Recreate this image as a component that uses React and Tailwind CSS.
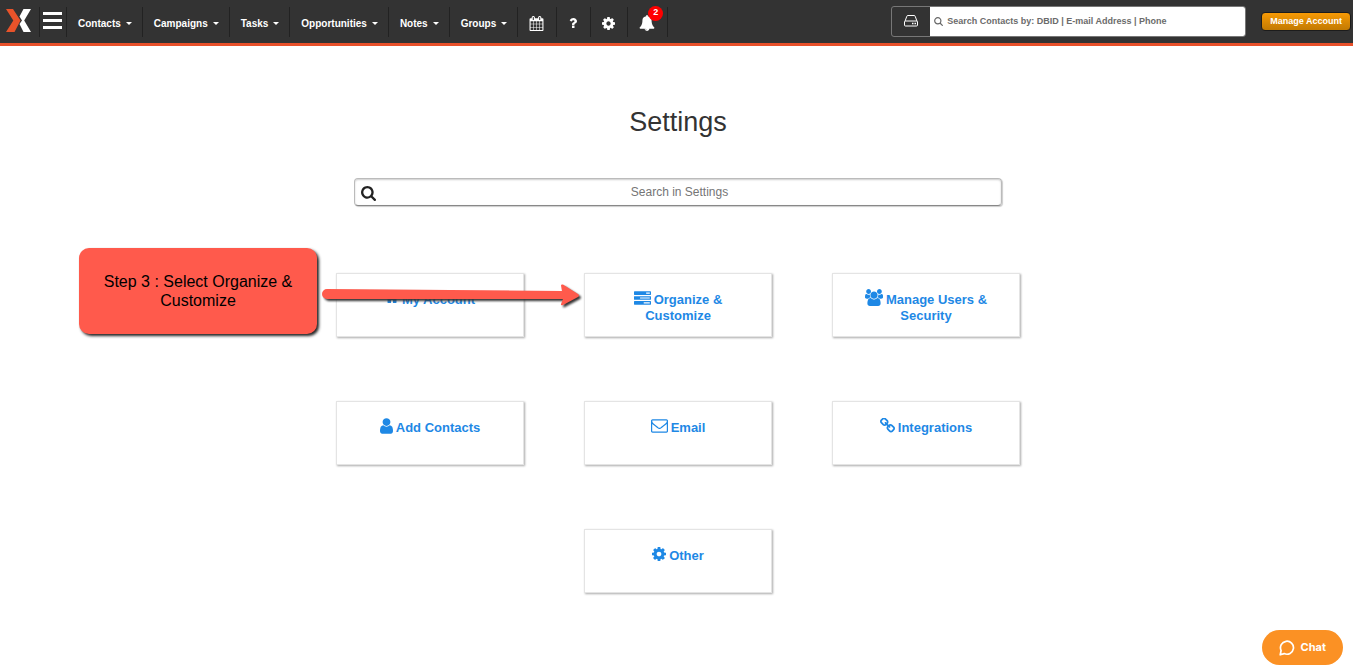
const ICONS = {
  calendar: {
    box: "0 0 1792 1792",
    d: "M192 1664h288v-288h-288v288zm352 0h320v-288h-320v288zm-352-352h288v-320h-288v320zm352 0h320v-320h-320v320zm-352-384h288v-288h-288v288zm736 736h320v-288h-320v288zm-384-736h320v-288h-320v288zm768 736h288v-288h-288v288zm-384-352h320v-320h-320v320zm-352-864v-288q0-13-9.5-22.5t-22.5-9.5h-64q-13 0-22.5 9.5t-9.5 22.5v288q0 13 9.5 22.5t22.5 9.5h64q13 0 22.5-9.5t9.5-22.5zm736 864h288v-320h-288v320zm-384-384h320v-288h-320v288zm384 0h288v-288h-288v288zm32-480v-288q0-13-9.5-22.5t-22.5-9.5h-64q-13 0-22.5 9.5t-9.5 22.5v288q0 13 9.5 22.5t22.5 9.5h64q13 0 22.5-9.5t9.5-22.5zm384-64v1280q0 52-38 90t-90 38h-1408q-52 0-90-38t-38-90v-1280q0-52 38-90t90-38h128v-96q0-66 47-113t113-47h64q66 0 113 47t47 113v96h384v-96q0-66 47-113t113-47h64q66 0 113 47t47 113v96h128q52 0 90 38t38 90z",
  },
  search: {
    box: "64 128 1664 1664",
    d: "M1216 832q0-185-131.5-316.5t-316.5-131.5-316.5 131.5-131.5 316.5 131.5 316.5 316.5 131.5 316.5-131.5 131.5-316.5zm512 832q0 52-38 90t-90 38q-54 0-90-38l-343-342q-179 124-399 124-143 0-273.5-55.5t-225-150-150-225-55.5-273.5 55.5-273.5 150-225 225-150 273.5-55.5 273.5 55.5 225 150 150 225 55.5 273.5q0 220-124 399l343 343q37 37 37 90z",
  },
  cog: {
    box: "128 128 1536 1536",
    d: "M1152 896q0-106-75-181t-181-75-181 75-75 181 75 181 181 75 181-75 75-181zm512-109v222q0 12-8 23t-20 13l-185 28q-19 54-39 91 35 50 107 138 10 12 10 25t-9 23q-27 37-99 108t-94 71q-12 0-26-9l-138-108q-44 23-91 38-16 136-29 186-7 28-36 28h-222q-14 0-24.5-8.5t-11.5-21.5l-28-184q-49-16-90-37l-141 107q-10 9-25 9-14 0-25-11-126-114-165-168-7-10-7-23 0-12 8-23 15-21 51-66.5t54-70.5q-27-50-41-99l-183-27q-13-2-21-12.5t-8-23.5v-222q0-12 8-23t19-13l186-28q14-46 39-92-40-57-107-138-10-12-10-24 0-10 9-23 26-36 98.5-107.5t94.5-71.5q13 0 26 10l138 107q44-23 91-38 16-136 29-186 7-28 36-28h222q14 0 24.5 8.5t11.5 21.5l28 184q49 16 90 37l142-107q9-9 24-9 13 0 25 10 129 119 165 170 7 8 7 22 0 12-8 23-15 21-51 66.5t-54 70.5q26 50 41 98l183 28q13 2 21 12.5t8 23.5z",
  },
  bell: {
    box: "0 0 1792 1792",
    d: "M912 1696q0-16-16-16-59 0-101.5-42.5t-42.5-101.5q0-16-16-16t-16 16q0 73 51.5 124.5t124.5 51.5q16 0 16-16zm816-288q0 52-38 90t-90 38h-448q0 106-75 181t-181 75-181-75-75-181h-448q-52 0-90-38t-38-90q50-42 91-88t85-119.5 74.5-158.5 50-206 19.5-260q0-152 117-282.5t307-158.5q-8-19-8-39 0-40 28-68t68-28 68 28 28 68q0 20-8 39 190 28 307 158.5t117 282.5q0 139 19.5 260t50 206 74.5 158.5 85 119.5 91 88z",
  },
  question: {
    box: "384 256 1024 1280",
    d: "M1088 1256v240q0 16-12 28t-28 12h-240q-16 0-28-12t-12-28v-240q0-16 12-28t28-12h240q16 0 28 12t12 28zm316-600q0 54-15.5 101t-35 76.5-55 59.5-57.5 43.5-61 35.5q-41 23-68.5 65t-27.5 67q0 17-12 32.5t-28 15.5h-240q-15 0-25.5-18.5t-10.5-37.5v-45q0-83 65-156.5t143-108.5q59-27 84-56t25-76q0-42-46.5-74t-107.5-32q-65 0-108 29-35 25-107 115-13 16-31 16-12 0-25-8l-164-125q-13-10-15.5-25t5.5-28q160-266 464-266 80 0 161 31t146 83 106 127.5 41 158.5z",
  },
  home: {
    box: "64 128 1664 1536",
    d: "M1472 992v480q0 26-19 45t-45 19h-384v-384h-256v384h-384q-26 0-45-19t-19-45v-480q0-1 .5-3t.5-3l575-474 575 474q1 2 1 6zm223-69l-62 74q-8 9-21 11h-3q-13 0-21-7l-692-577-692 577q-12 8-24 7-13-2-21-11l-62-74q-8-10-7-23.5t11-21.5l719-599q32-26 76-26t76 26l244 204v-195q0-14 9-23t23-9h192q14 0 23 9t9 23v408l219 182q10 8 11 21.5t-7 23.5z",
  },
  tasks: {
    box: "0 128 1792 1408",
    d: "M1024 1408h640v-128h-640v128zm-384-512h1024v-128h-1024v128zm640-512h384v-128h-384v128zm512 832v256q0 26-19 45t-45 19h-1664q-26 0-45-19t-19-45v-256q0-26 19-45t45-19h1664q26 0 45 19t19 45zm0-512v256q0 26-19 45t-45 19h-1664q-26 0-45-19t-19-45v-256q0-26 19-45t45-19h1664q26 0 45 19t19 45zm0-512v256q0 26-19 45t-45 19h-1664q-26 0-45-19t-19-45v-256q0-26 19-45t45-19h1664q26 0 45 19t19 45z",
  },
  users: {
    box: "0 0 1920 1792",
    d: "M593 896q-162 5-265 128h-134q-82 0-138-40.5t-56-118.5q0-353 124-353 6 0 43.5 21t97.5 42.5 119 21.5q67 0 133-23-5 37-5 66 0 159 93 256zm1071 637q0 120-73 189.5t-194 69.5h-874q-121 0-194-69.5t-73-189.5q0-53 3.5-103.5t14-109 26.5-108.5 43-97.5 62-81 85.5-53.5 111.5-20q10 0 43 21.5t73 48 107 48 135 21.5 135-21.5 107-48 73-48 43-21.5q61 0 111.5 20t85.5 53.5 62 81 43 97.5 26.5 108.5 14 109 3.5 103.5zm-1024-1277q0 106-75 181t-181 75-181-75-75-181 75-181 181-75 181 75 75 181zm704 384q0 159-112.5 271.5t-271.5 112.5-271.5-112.5-112.5-271.5 112.5-271.5 271.5-112.5 271.5 112.5 112.5 271.5zm576 225q0 78-56 118.5t-138 40.5h-134q-103-123-265-128 93-97 93-256 0-29-5-66 66 23 133 23 59 0 119-21.5t97.5-42.5 43.5-21q124 0 124 353zm-128-609q0 106-75 181t-181 75-181-75-75-181 75-181 181-75 181 75 75 181z",
  },
  user: {
    box: "256 128 1280 1536",
    d: "M1536 1399q0 109-62.5 187t-150.5 78h-854q-88 0-150.5-78t-62.5-187q0-85 8.5-160.5t31.5-152 58.5-131 94-89 134.5-34.5q131 128 313 128t313-128q76 0 134.5 34.5t94 89 58.5 131 31.5 152 8.5 160.5zm-256-887q0 159-112.5 271.5t-271.5 112.5-271.5-112.5-112.5-271.5 112.5-271.5 271.5-112.5 271.5 112.5 112.5 271.5z",
  },
  envelope: {
    box: "0 256 1792 1408",
    d: "M1664 1504v-768q-32 36-69 66-268 206-426 338-51 43-83 67t-86.5 48.5-102.5 24.5h-2q-48 0-102.5-24.5t-86.5-48.5-83-67q-158-132-426-338-37-30-69-66v768q0 13 9.5 22.5t22.5 9.5h1472q13 0 22.5-9.5t9.5-22.5zm0-1051v-24.5l-.5-13-3-12.5-5.5-9-9-7.5-14-2.5h-1472q-13 0-22.5 9.5t-9.5 22.5q0 168 147 284 193 152 401 317 6 5 35 29.5t46 37.5 44.5 31.5 50.5 27.5 43 9h2q20 0 43-9t50.5-27.5 44.5-31.5 46-37.5 35-29.5q208-165 401-317 54-43 100.5-115.5t46.5-131.5zm128-37v1088q0 66-47 113t-113 47h-1472q-66 0-113-47t-47-113v-1088q0-66 47-113t113-47h1472q66 0 113 47t47 113z",
  },
  link: {
    box: "80 80 1632 1632",
    d: "M1520 1216q0-40-28-68l-208-208q-28-28-68-28-42 0-72 32 3 3 19 18.5t21.5 21.5 15 19 13 25.5 3.5 27.5q0 40-28 68t-68 28q-15 0-27.5-3.5t-25.5-13-19-15-21.5-21.5-18.5-19q-33 31-33 73 0 40 28 68l206 207q27 27 68 27 40 0 68-26l147-146q28-28 28-67zm-703-705q0-40-28-68l-206-207q-28-28-68-28-39 0-68 27l-147 146q-28 28-28 67 0 40 28 68l208 208q27 27 68 27 42 0 72-31-3-3-19-18.5t-21.5-21.5-15-19-13-25.5-3.5-27.5q0-40 28-68t68-28q15 0 27.5 3.5t25.5 13 19 15 21.5 21.5 18.5 19q33-31 33-73zm895 705q0 120-85 203l-147 146q-83 83-203 83-121 0-204-85l-206-207q-83-83-83-203 0-123 88-209l-88-88q-86 88-208 88-120 0-204-84l-208-208q-84-84-84-204t85-203l147-146q83-83 203-83 121 0 204 85l206 207q83 83 83 203 0 123-88 209l88 88q86-88 208-88 120 0 204 84l208 208q84 84 84 204z",
  },
};

function Icon({ name, className }) {
  return (
    <svg viewBox={ICONS[name].box} fill="currentColor" className={className} aria-hidden="true">
      <path d={ICONS[name].d} />
    </svg>
  );
}

function Logo() {
  return (
    <svg viewBox="0 0 25 23" className="h-[23px] w-[25px]" aria-hidden="true">
      <path d="M0 0h7l7.500 11.500L8.500 23H0l7.300-11.500z" fill="#e8532a" />
      <path d="M17.500 0H25l-6.800 11.500L25 23h-7.500l-4-8 2.500-3.500-2.500-4z" fill="#fff" />
    </svg>
  );
}

const MENUS = ["Contacts", "Campaigns", "Tasks", "Opportunities", "Notes", "Groups"];

const NAV_ITEM = "flex h-[30px] items-center border-r border-[#222] pt-[3px] pl-[11px] text-white";

function Header() {
  return (
    <header className="flex h-[46px] items-center justify-between border-b-[3px] border-[#e8502a] bg-[#333]">
      <nav className="flex items-center" aria-label="Main">
        <a href="#home" aria-label="Home" className="flex h-[30px] w-10 items-center border-r border-[#222] pb-0.5 pl-1.5">
          <Logo />
        </a>
        <button type="button" aria-label="Menu" className="flex h-[30px] w-[27px] flex-col justify-center gap-1 border-r border-[#222] pr-1 pb-0.5 pl-[3px]">
          <span className="h-[3px] w-full bg-white" />
          <span className="h-[3px] w-full bg-white" />
          <span className="h-[3px] w-full bg-white" />
        </button>
        {MENUS.map((label) => (
          <button key={label} type="button" className={NAV_ITEM + " gap-[5px] pr-2.5 text-[10px] font-bold"}>
            {label}
            <svg viewBox="0 0 6 3" className="h-[3px] w-1.5" fill="currentColor" aria-hidden="true">
              <path d="M0 0h6L3 3z" />
            </svg>
          </button>
        ))}
        <button type="button" aria-label="Calendar" className={NAV_ITEM + " pr-3"}>
          <Icon name="calendar" className="size-[15px]" />
        </button>
        <button type="button" aria-label="Help" className={NAV_ITEM + " pr-3"}>
          <Icon name="question" className="size-2.5" />
        </button>
        <button type="button" aria-label="Settings" className={NAV_ITEM + " pr-3"}>
          <Icon name="cog" className="size-[13px]" />
        </button>
        <button type="button" aria-label="Notifications" className={NAV_ITEM + " relative pr-3"}>
          <Icon name="bell" className="size-4" />
          <span className="absolute -top-px right-1 flex size-[15px] items-center justify-center rounded-full bg-[#f00] text-[9px] font-bold">
            2
          </span>
        </button>
      </nav>
      <div className="flex items-center gap-[15px] pr-0.5">
        <div className="flex h-[31px] items-stretch overflow-hidden rounded-[3px] border border-[#777]">
          <button type="button" aria-label="Saved searches" className="flex w-[38px] items-center justify-center pb-0.5 text-white">
            <svg viewBox="0 0 14 12" className="h-3 w-3.5" fill="none" stroke="currentColor" aria-hidden="true">
              <path d="M.5 7v3q0 1 1 1h11q1 0 1-1V7q0-1-1-1h-11q-1 0-1 1zM1 6.300l1.800-5Q3 .5 4 .5h6q1 0 1.200.8l1.800 5" />
              <path d="M8 8.500h1.500M10.500 8.500H12" strokeWidth="1.300" />
            </svg>
          </button>
          <label className="flex w-[315px] items-center gap-1 bg-white pl-1 text-[#666]">
            <svg viewBox="0 0 9 9" className="size-[9px]" fill="none" stroke="currentColor" strokeWidth="1.200" aria-hidden="true">
              <circle cx="3.800" cy="3.800" r="3.100" />
              <path d="M6 6l2.700 2.700" />
            </svg>
            <input
              type="text"
              aria-label="Search contacts"
              placeholder="Search Contacts by: DBID | E-mail Address | Phone"
              className="min-w-0 flex-1 text-[9px] font-bold outline-none placeholder:text-[#6b6b6b]"
            />
          </label>
        </div>
        <button
          type="button"
          className="h-[19px] rounded-[4px] border border-[#1c1c1c] bg-linear-to-b from-[#f79a05] to-[#c27a02] px-2 text-[9px] font-bold whitespace-nowrap text-white"
        >
          Manage Account
        </button>
      </div>
    </header>
  );
}

const CARDS = [
  { icon: "home", size: "h-3 w-[14px]", label: "My Account" },
  { icon: "tasks", size: "h-[14px] w-[17px]", label: "Organize & Customize" },
  { icon: "users", size: "h-[17px] w-[18px]", label: "Manage Users & Security" },
  { icon: "user", size: "h-4 w-[13px]", label: "Add Contacts" },
  { icon: "envelope", size: "h-[14px] w-[17px]", label: "Email" },
  { icon: "link", size: "size-[15px]", label: "Integrations" },
  { icon: "cog", size: "size-[14px]", label: "Other" },
];

function Card({ icon, size, label }) {
  return (
    <a
      href="#settings"
      className="h-16 w-[188px] border border-[#e4e4e4] bg-white px-7 pt-[18px] text-center text-[13px] leading-4 font-bold text-[#1e88e5] shadow-[1px_1px_2px_#aaa]"
    >
      <Icon name={icon} className={"mr-[3px] -mt-1.5 inline-block align-middle " + size} />
      {label}
    </a>
  );
}

function Annotation() {
  return (
    <>
      <div className="absolute -top-[25px] -left-[257px] flex h-[86px] w-[238px] items-center justify-center rounded-[10px] bg-[#ff5a4c] px-5 text-center text-base leading-[19px] text-black shadow-[2px_2px_3px_#222]">
        Step 3 : Select Organize &amp; Customize
      </div>
      <svg
        viewBox="0 0 270 34"
        className="absolute top-[6px] -left-[19px] h-[34px] w-[270px] drop-shadow-[2px_2px_1px_#333]"
        aria-hidden="true"
      >
        <path d="M10 10L245 12L244 6.500Q244 5 246 5.500L261 15Q263 16.500 261 18L246 26Q243.500 27 244 25L246 20L10 20A5 5 0 0 1 10 10z" fill="#ff5a4c" />
      </svg>
    </>
  );
}

export default function App() {
  return (
    <div className="flex min-h-screen flex-col bg-white font-['Liberation_Sans',Arial,sans-serif]">
      <Header />
      <main className="flex flex-col items-center pt-[60px] pl-[3px]">
        <h1 className="text-[27px] leading-8 text-[#333]">Settings</h1>
        <label className="mt-10 flex h-7 w-[648px] items-center rounded-[4px] border border-[#bbb] border-b-[#888] px-1.5 shadow-[inset_0_1px_2px_#ccc,1px_1px_1px_#ccc]">
          <Icon name="search" className="mt-0.5 size-[15px] text-[#222]" />
          <input
            type="text"
            aria-label="Search in Settings"
            placeholder="Search in Settings"
            className="min-w-0 flex-1 pr-3 text-center text-xs outline-none placeholder:text-[#757575]"
          />
        </label>
        <div className="relative mt-[67px] flex w-[684px] flex-wrap justify-center gap-x-[60px] gap-y-16">
          {CARDS.map((card) => (
            <Card key={card.label} {...card} />
          ))}
          <Annotation />
        </div>
      </main>
      <button
        type="button"
        className="fixed right-2.5 bottom-[3px] flex h-[35px] items-center gap-1.5 rounded-full bg-[#fb9124] px-[17px] font-['Inter',sans-serif] text-[11px] font-bold text-white"
      >
        <svg viewBox="0 0 16 16" className="size-4" fill="none" stroke="currentColor" strokeWidth="1.700" aria-hidden="true">
          <path d="M1.200 14.800l.9-4.300A6.500 6.500 0 1 1 5.200 13.600z" strokeLinejoin="round" />
        </svg>
        Chat
      </button>
    </div>
  );
}
